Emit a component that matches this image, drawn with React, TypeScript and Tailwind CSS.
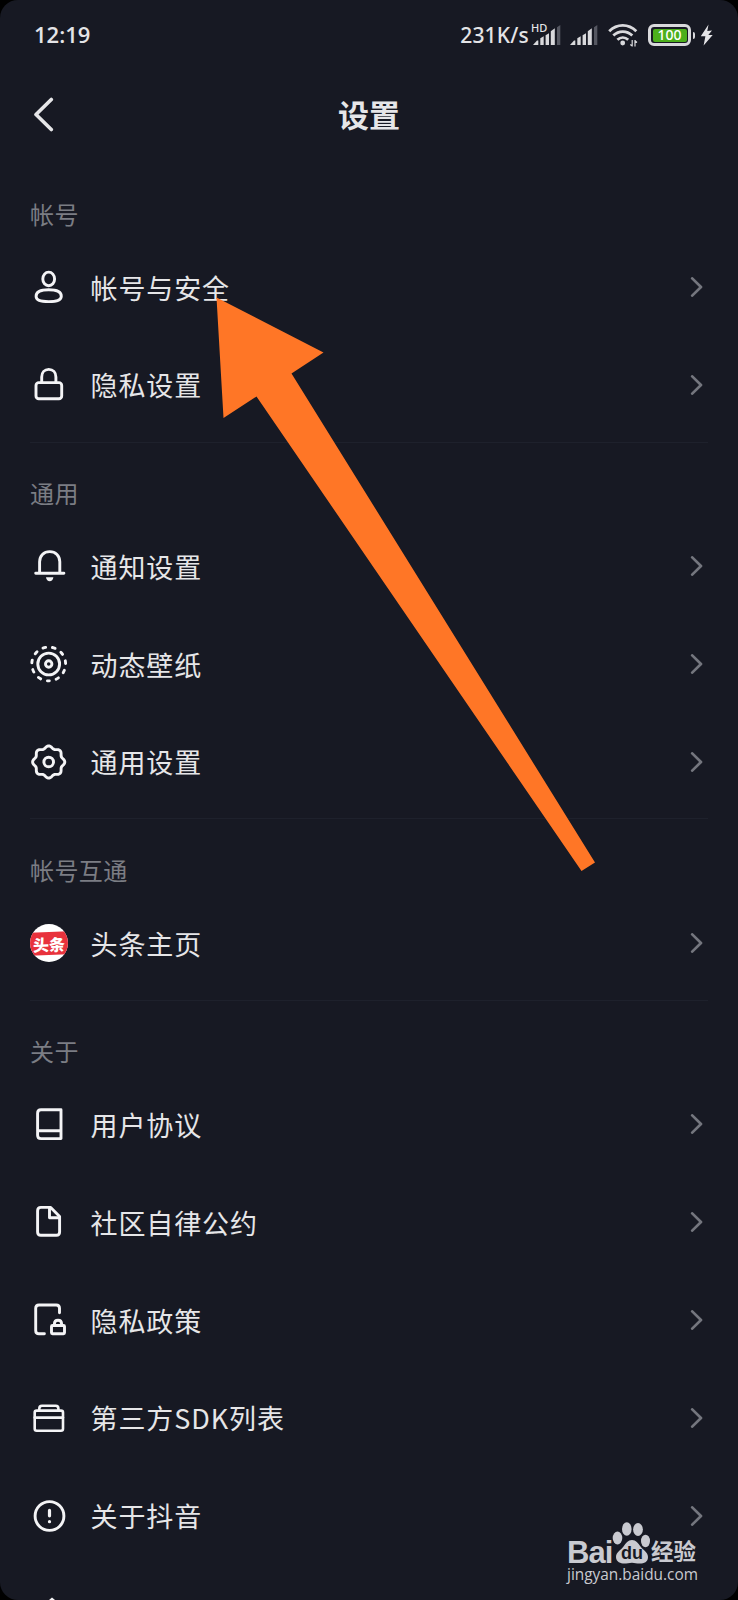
import type { ReactNode } from "react";

type Item = { label: string; icon: ReactNode };
type Section = { title: string; items: Item[] };

function LineIcon({ children, width = 2.9 }: { children: ReactNode; width?: number }) {
  return (
    <svg
      viewBox="0 0 40 40"
      className="h-10 w-10"
      fill="none"
      stroke="#f4f4f6"
      strokeWidth={width}
      strokeLinecap="round"
      strokeLinejoin="round"
    >
      {children}
    </svg>
  );
}

const userIcon = (
  <LineIcon>
    <ellipse cx="19.700" cy="11.900" rx="5.900" ry="6.800" />
    <path d="M19.700 22.700c7.600 0 12.600 2.300 12.600 6.500 0 3.800-3.800 5.400-12.600 5.400S7.100 33 7.100 29.200c0-4.200 5-6.500 12.600-6.500z" />
  </LineIcon>
);

const lockIcon = (
  <LineIcon>
    <rect x="7" y="17.600" width="25.700" height="16.200" rx="2.800" />
    <path d="M12.700 17.600v-5.500c0-4.600 2.900-7.700 7.100-7.700s7.100 3.100 7.100 7.700v5.500" />
  </LineIcon>
);

const bellIcon = (
  <LineIcon>
    <path d="M6.700 27.200h28.200M10.600 27V15.800c0-6.100 4.200-10.200 10.100-10.200s10.100 4.100 10.100 10.200V27" />
    <path d="M17 31.300h7.400c-.4 2.500-1.800 4-3.700 4s-3.300-1.500-3.700-4z" fill="#f4f4f6" stroke="none" />
  </LineIcon>
);

const wallpaperIcon = (
  <LineIcon>
    <circle cx="19.700" cy="20" r="16.900" strokeDasharray="2.700 6.953" strokeDashoffset="1.350" transform="rotate(90 19.700 20)" />
    <circle cx="19.700" cy="20" r="10.900" />
    <circle cx="19.700" cy="20" r="3.200" />
  </LineIcon>
);

// eight-lobed outline sampled every 3 degrees
const gearPoints = Array.from({ length: 120 }, (_, i) => {
  const angle = (i * Math.PI) / 60;
  const r = 14.9 + 1.2 * Math.cos(8 * angle);
  return `${(19.7 + r * Math.cos(angle)).toFixed(2)},${(20 + r * Math.sin(angle)).toFixed(2)}`;
}).join(" ");

const gearIcon = (
  <LineIcon>
    <polygon points={gearPoints} />
    <circle cx="19.700" cy="20" r="4.800" />
  </LineIcon>
);

const toutiaoIcon = (
  <div className="flex h-[38px] w-[38px] items-center justify-center overflow-hidden rounded-full bg-white">
    <div className="flex h-[23px] w-[40px] shrink-0 -skew-y-2 items-center justify-center bg-[#e8323c] text-[16px] font-black leading-none text-white">
      <span>头条</span>
    </div>
  </div>
);

const bookIcon = (
  <LineIcon>
    <path d="M32 26.800V5.800H12c-2 0-3.400 1.400-3.400 3.400v22c0 2 1.400 3.400 3.400 3.400h20v-7.800H8.600" />
  </LineIcon>
);

const fileIcon = (
  <LineIcon>
    <path d="M11.900 5.400h9.800l8.900 9v15.500c0 2-1.300 3.300-3.300 3.300H11.900c-2 0-3.300-1.300-3.300-3.300V8.700c0-2 1.300-3.300 3.300-3.300z" />
    <path d="M20.500 5.800v9.900h9.800" />
  </LineIcon>
);

const fileLockIcon = (
  <LineIcon>
    <path d="M15.400 33.800H10c-2 0-3.300-1.300-3.300-3.300V8.300C6.700 6.300 8 5 10 5h17.200c2 0 3.300 1.300 3.300 3.300v4.500" />
    <rect x="22.500" y="25.500" width="13" height="8.300" rx="1" />
    <path d="M25.400 25.200v-1.200c0-2.300 1.500-3.800 3.600-3.800s3.600 1.500 3.600 3.800v1.200" />
  </LineIcon>
);

const boxIcon = (
  <LineIcon width={2.6}>
    <rect x="5.700" y="12.600" width="28.300" height="20.200" rx="2" />
    <path d="M5.700 19.600H34M10.300 12.400v-1.700c0-1.700 1-2.900 2.700-2.900h13.700c1.700 0 2.700 1.200 2.700 2.900v1.700" />
  </LineIcon>
);

const aboutIcon = (
  <LineIcon>
    <circle cx="20.500" cy="20" r="14.400" />
    <path d="M20.500 14.400v5.400M20.500 25.500v.2" strokeWidth="3.200" />
  </LineIcon>
);

const sections: Section[] = [
  {
    title: "帐号",
    items: [
      { label: "帐号与安全", icon: userIcon },
      { label: "隐私设置", icon: lockIcon },
    ],
  },
  {
    title: "通用",
    items: [
      { label: "通知设置", icon: bellIcon },
      { label: "动态壁纸", icon: wallpaperIcon },
      { label: "通用设置", icon: gearIcon },
    ],
  },
  {
    title: "帐号互通",
    items: [{ label: "头条主页", icon: toutiaoIcon }],
  },
  {
    title: "关于",
    items: [
      { label: "用户协议", icon: bookIcon },
      { label: "社区自律公约", icon: fileIcon },
      { label: "隐私政策", icon: fileLockIcon },
      { label: "第三方SDK列表", icon: boxIcon },
      { label: "关于抖音", icon: aboutIcon },
    ],
  },
];

function SignalBars() {
  return (
    <svg viewBox="0 0 28 20" className="h-5 w-7" fill="#d9d9dc">
      <path d="M0 20l4-4.500h1.300V20z" />
      <path d="M7.300 13.300l3.400-2V20H7.300z" />
      <path d="M12.600 10.300l3.400-2V20h-3.400z" />
      <path d="M17.800 6.300l4-3V20h-4z" />
      <path d="M24 2.300L27.300 0v20H24z" fill="#555761" />
    </svg>
  );
}

function StatusBar() {
  return (
    <header className="flex h-[70px] items-center justify-between pl-[34px] pr-[25px] text-[#e4e4e7]">
      <span className="pb-[2px] font-['Open_Sans'] text-[22px] font-semibold">12:19</span>
      <div className="flex items-center">
        <span className="pt-[2px] font-['Noto_Sans'] text-[21px] font-medium tracking-[0.200px]">231K/s</span>
        <div className="relative ml-[4px]">
          <SignalBars />
          <span className="absolute -left-[2px] -top-[3px] font-['Noto_Sans'] text-[11px] font-medium leading-none">HD</span>
        </div>
        <div className="ml-[9px]">
          <SignalBars />
        </div>
        <svg viewBox="0 0 30 24" className="ml-[10px] h-6 w-[30px]" fill="none" stroke="#d9d9dc" strokeWidth="2.800">
          <path d="M1.200 8.200C9 .3 20.500.3 28.300 8.200" />
          <path d="M5.300 12.600c5.500-5.300 13.500-5.300 19 0" />
          <path d="M9.400 16.800c3.200-3 7.600-3 10.800 0" />
          <circle cx="14.700" cy="20" r="2.400" fill="#d9d9dc" stroke="none" />
          <path d="M24.200 17v6.500M27 17v6.500M22.300 21.500l1.900 1.500M27 17.800l2 1.700" strokeWidth="1.200" />
        </svg>
        <div className="ml-[10px] flex h-[22px] w-[43px] items-center rounded-[6px] border-[3px] border-[#d9d9dc] p-[1.500px]">
          <div className="flex h-full w-full items-center justify-center rounded-[2px] bg-[#4caf1b] font-['Noto_Sans'] text-[14px] font-medium leading-none text-white">
            100
          </div>
        </div>
        <div className="ml-[2px] h-[7px] w-[2px] rounded-r bg-[#d9d9dc]" />
        <svg viewBox="0 0 13 22" className="ml-[5px] h-[22px] w-[13px]" fill="#e4e4e7">
          <path d="M8.500.5L.8 12.200h4.600L3.600 21.500 12.700 11H8.300L12 6.500 7.300 7z" />
        </svg>
      </div>
    </header>
  );
}

function Row({ label, icon }: Item) {
  return (
    <li className="flex h-[97.800px] items-center pl-[29px] pr-[35px]">
      <span className="flex w-10 justify-center">{icon}</span>
      <span className="ml-[21.500px] flex-1 text-[27px] leading-none tracking-[0.900px] text-[#e6e6e8]">{label}</span>
      <svg viewBox="0 0 13 20" className="h-5 w-[13px]" fill="none" stroke="#74767e" strokeWidth="2.700" strokeLinecap="round" strokeLinejoin="round">
        <path d="M2.200 1.400L11 10l-8.800 8.600" />
      </svg>
    </li>
  );
}

function Watermark() {
  return (
    <div className="absolute bottom-[16px] right-[35px] w-[136px] text-[#c9cad0]">
      <div className="flex h-[42px] items-end">
        <span className="w-[45px] font-['Liberation_Sans'] text-[31px] font-bold leading-[25px] tracking-[-1px]">Bai</span>
        <div className="relative h-[42px] w-[38px]">
          <svg viewBox="0 0 38 42" className="-mt-[1px] h-[42px] w-[38px]" fill="currentColor">
            <ellipse cx="5.500" cy="16" rx="4.800" ry="6.500" />
            <ellipse cx="14.800" cy="7" rx="4.800" ry="6.700" />
            <ellipse cx="26" cy="7.500" rx="4.900" ry="6.500" />
            <ellipse cx="33.500" cy="19" rx="4.500" ry="6.200" />
            <path d="M20 18c4 0 6 3 8.500 6.500S36 30 36 35s-4 6.500-8 6.500-5-.8-8-.8-5 .8-8 .8-8-1.500-8-6.500 5-7 7.500-10.500S16 18 20 18z" />
          </svg>
          <span className="absolute left-[9px] top-[21px] font-['Liberation_Sans'] text-[18px] font-bold leading-none text-[#171923]">du</span>
        </div>
        <span className="ml-[1px] whitespace-nowrap text-[22.500px] font-bold leading-[29px]">经验</span>
      </div>
      <div className="font-['Open_Sans'] text-[15.400px] leading-[19px]">jingyan.baidu.com</div>
    </div>
  );
}

export default function App() {
  return (
    <div className="h-[1600px] w-[738px] overflow-hidden bg-black">
      <main className="relative h-full overflow-hidden rounded-[18px] bg-[#171923] font-['Noto_Sans_CJK_SC',sans-serif]">
        <StatusBar />
        <div className="grid h-[90px] grid-cols-[1fr_auto_1fr] items-center px-[33px]">
          <svg viewBox="0 0 22 36" className="h-9 w-[22px]" fill="none" stroke="#e6e6e8" strokeWidth="3.600" strokeLinecap="round" strokeLinejoin="round">
            <path d="M18.300 2.500L3 17.500l15.300 15" />
          </svg>
          <h1 className="pb-[4px] text-[31px] font-bold leading-none text-[#e6e6e8]">设置</h1>
        </div>
        <div className="pt-[3.500px]">
          {sections.map((section, i) => (
            <section key={section.title}>
              {i > 0 && <div className="mx-[30px] mt-[7.700px] h-px bg-[#1e212c]" />}
              <h2 className="mt-[38.500px] flex h-[24px] items-center pl-[30px] text-[24px] leading-none tracking-[0.400px] text-[#7b7d84]">
                {section.title}
              </h2>
              <ul className="pt-[12.300px]">
                {section.items.map((item) => (
                  <Row key={item.label} {...item} />
                ))}
              </ul>
            </section>
          ))}
        </div>
        {/* top edge of the next row's icon */}
        <svg viewBox="0 0 10 4" className="absolute bottom-0 left-[47px] h-1 w-2.5" fill="#f4f4f6">
          <path d="M5 1.500l3 2.500H2z" />
        </svg>
        <svg viewBox="0 0 738 1600" className="pointer-events-none absolute inset-0 h-full w-full" fill="#ff7626">
          <path d="M216.500 297.500L323.500 352.500L291.500 373.500L595 862.500L581.500 871L256.500 396.500L223.500 418Z" />
        </svg>
        <Watermark />
      </main>
    </div>
  );
}
